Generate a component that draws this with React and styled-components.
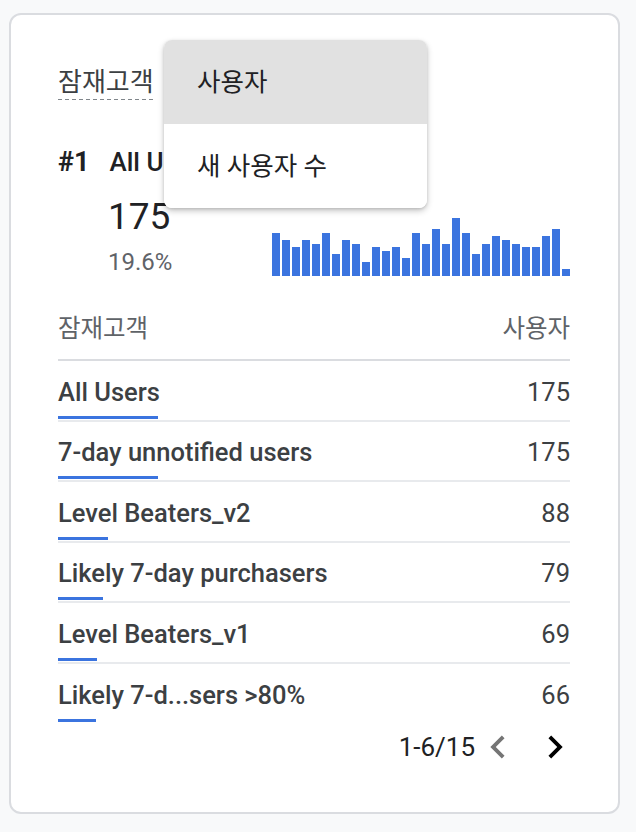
import React from "react";
import styled, { createGlobalStyle } from "styled-components";

const GlobalStyle = createGlobalStyle`
  body {
    margin: 0;
    background: #f8f9fa;
    font-family: Roboto, "Noto Sans CJK KR", sans-serif;
  }
`;

const Page = styled.div`
  padding: 13px 0 0 9px;
`;

const Card = styled.div`
  position: relative;
  box-sizing: border-box;
  width: 611px;
  height: 801px;
  background: #fff;
  border: 2px solid #dadce0;
  border-radius: 12px;
  padding: 51px 48px 0 47px;
  display: flex;
  flex-direction: column;
`;

const Title = styled.div`
  align-self: flex-start;
  font-size: 26px;
  line-height: 32px;
  padding-bottom: 2px;
  color: #3c4043;
  background: repeating-linear-gradient(to right, #80868b 0 4px, transparent 4px 7px) bottom / 100% 1.5px no-repeat;
`;

const TopItem = styled.div`
  margin-top: 47px;
  font-size: 26px;
  line-height: 30px;
  font-weight: 500;
  color: #202124;
`;

const Rank = styled.span`
  font-weight: 700;
  font-size: 27px;
  margin-right: 20px;
`;

const Stats = styled.div`
  margin-top: 18px;
  display: flex;
  justify-content: space-between;
  align-items: flex-end;
`;

const Figures = styled.div`
  padding-left: 50px;
`;

const BigNumber = styled.div`
  font-size: 37px;
  line-height: 44px;
  color: #202124;
`;

const Percent = styled.div`
  margin-top: 9px;
  font-size: 24px;
  line-height: 28px;
  color: #5f6368;
`;

const Chart = styled.div`
  display: flex;
  align-items: flex-end;
  gap: 2px;
  height: 60px;
`;

const Bar = styled.div`
  width: 8px;
  background: #3b74df;
`;

const HeaderRow = styled.div`
  margin-top: 39px;
  display: flex;
  justify-content: space-between;
  font-size: 24.5px;
  line-height: 28px;
  color: #5f6368;
  padding-bottom: 16px;
  border-bottom: 2px solid #dadce0;
`;

const Row = styled.div`
  padding-top: 18.6px;
  border-bottom: ${(p) => (p.$last ? "none" : "2px solid #e8eaed")};
`;

const RowLine = styled.div`
  display: flex;
  justify-content: space-between;
  font-size: 25.5px;
  line-height: 24px;
  color: #3c4043;
`;

const Name = styled.span`
  font-weight: 500;
`;

const Value = styled.span``;

const Meter = styled.div`
  margin: 12px 0 1px;
  height: 3px;
  background: #3b74df;
`;

const Footer = styled.div`
  margin-top: 1px;
  margin-right: -8px;
  display: flex;
  justify-content: flex-end;
  align-items: center;
  font-size: 26px;
  color: #202124;
`;

const PageButton = styled.button`
  border: 0;
  background: none;
  padding: 0;
  width: 46px;
  height: 46px;
  margin-left: ${(p) => p.$gap || 0}px;
  color: ${(p) => (p.$disabled ? "#757575" : "#000")};
  svg {
    display: block;
  }
`;

const Menu = styled.div`
  position: absolute;
  left: 153px;
  top: 25px;
  width: 263px;
  background: #fff;
  border-radius: 8px;
  overflow: hidden;
  box-shadow: 0 3px 6px rgba(0, 0, 0, 0.22), 0 1px 3px rgba(0, 0, 0, 0.12);
`;

const MenuItem = styled.div`
  box-sizing: border-box;
  height: 84px;
  display: flex;
  align-items: center;
  padding: 0 0 6px 33px;
  font-size: 25.5px;
  color: #202124;
  background: ${(p) => (p.$active ? "#e1e1e1" : "#fff")};
`;

const bars = [43, 36, 29, 36, 32, 43, 22, 36, 32, 14, 29, 25, 29, 18, 43, 32, 47, 32, 58, 43, 22, 32, 40, 36, 32, 29, 29, 40, 47, 7];

const rows = [
  { name: "All Users", value: 175 },
  { name: "7-day unnotified users", value: 175 },
  { name: "Level Beaters_v2", value: 88 },
  { name: "Likely 7-day purchasers", value: 79 },
  { name: "Level Beaters_v1", value: 69 },
  { name: "Likely 7-d...sers >80%", value: 66 },
];

const ChevronLeft = () => (
  <svg width="46" height="46" viewBox="0 0 24 24" fill="currentColor">
    <path d="M15.41 7.41 14 6l-6 6 6 6 1.41-1.41L10.83 12z" />
  </svg>
);

const ChevronRight = () => (
  <svg width="46" height="46" viewBox="0 0 24 24" fill="currentColor">
    <path d="M10 6 8.59 7.41 13.17 12l-4.58 4.59L10 18l6-6z" />
  </svg>
);

export default function App() {
  return (
    <Page>
      <GlobalStyle />
      <Card>
        <Title>잠재고객</Title>
        <TopItem>
          <Rank>#1</Rank>All Users
        </TopItem>
        <Stats>
          <Figures>
            <BigNumber>175</BigNumber>
            <Percent>19.6%</Percent>
          </Figures>
          <Chart>
            {bars.map((h, i) => (
              <Bar key={i} style={{ height: h }} />
            ))}
          </Chart>
        </Stats>
        <HeaderRow>
          <span>잠재고객</span>
          <span>사용자</span>
        </HeaderRow>
        {rows.map((r, i) => (
          <Row key={r.name} $last={i === rows.length - 1}>
            <RowLine>
              <Name>{r.name}</Name>
              <Value>{r.value}</Value>
            </RowLine>
            <Meter style={{ width: (r.value / 175) * 100 }} />
          </Row>
        ))}
        <Footer>
          1-6/15
          <PageButton $disabled>
            <ChevronLeft />
          </PageButton>
          <PageButton $gap={11}>
            <ChevronRight />
          </PageButton>
        </Footer>
        <Menu>
          <MenuItem $active>사용자</MenuItem>
          <MenuItem>새 사용자 수</MenuItem>
        </Menu>
      </Card>
    </Page>
  );
}
